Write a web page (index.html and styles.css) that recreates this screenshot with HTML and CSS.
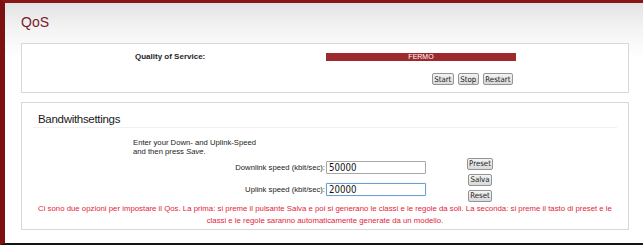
FILE: index.html
```html
<!DOCTYPE html>
<html lang="it">
<head>
    <meta charset="UTF-8">
    <meta name="viewport" content="width=device-width, initial-scale=1.0">
    <title>QoS</title>
    <link rel="stylesheet" href="styles.css">
</head>
<body>
    <div class="frame">
        <div class="page">
            <h1 class="title">QoS</h1>

            <!-- Stato del servizio -->
            <div class="box status-box">
                <span class="status-label">Quality of Service:</span>
                <span class="status-bar">FERMO</span>
                <span></span>
                <div class="status-actions">
                    <button class="btn">Start</button>
                    <button class="btn">Stop</button>
                    <button class="btn">Restart</button>
                </div>
            </div>

            <!-- Banda -->
            <div class="box bw-box">
                <h2 class="bw-title">Bandwithsettings</h2>
                <p class="hint">Enter your Down- and Uplink-Speed<br>and then press <i>Save</i>.</p>
                <div class="bw-form">
                    <div class="fields">
                        <label class="field">
                            <span class="field-label">Downlink speed (kbit/sec):</span>
                            <input class="speed" type="text" value="50000">
                        </label>
                        <label class="field">
                            <span class="field-label">Uplink speed (kbit/sec):</span>
                            <input class="speed focused" type="text" value="20000">
                        </label>
                    </div>
                    <div class="bw-buttons">
                        <button class="btn">Preset</button>
                        <button class="btn">Salva</button>
                        <button class="btn">Reset</button>
                    </div>
                </div>
                <p class="note">Ci sono due opzioni per impostare il Qos. La prima: si preme il pulsante Salva e poi si generano le classi e le regole da soli. La seconda: si preme il tasto di preset e le<br>classi e le regole saranno automaticamente generate da un modello.</p>
            </div>
        </div>
    </div>
</body>
</html>
```

FILE: styles.css
```css
/* Cornice della pagina */
body {
    margin: 0;
    padding: 0;
    font-family: "Liberation Sans", Arial, sans-serif;
    color: #222;
    background: #fff;
}

.frame {
    height: 245px;
    box-sizing: border-box;
    border-top: 3px solid #8a1717;
    border-left: 5px solid #7c1111;
    border-bottom: 2px solid #151515;
}

.page {
    height: 100%;
    box-sizing: border-box;
    padding: 0 14px 0 16px;
    background: linear-gradient(180deg, #e3e3e3 0, #f3f3f3 25px, #ffffff 55px);
    overflow: hidden;
}

.title {
    margin: 11px 0 13px 0;
    font-size: 14px;
    line-height: 16px;
    font-weight: normal;
    color: #7a1a2a;
}

.box {
    background: #fff;
    border: 1px solid #d8d8d8;
}

/* Stato */
.status-box {
    display: grid;
    grid-template-columns: 191px 190px;
    row-gap: 12px;
    padding: 9px 0 7px 113px;
}

.status-label {
    font-size: 8px;
    line-height: 8px;
    font-weight: bold;
    color: #1e1e1e;
    align-self: center;
}

.status-bar {
    height: 8px;
    line-height: 8px;
    background: #9d2b2e;
    color: #fff;
    font-size: 7px;
    text-align: center;
}

.status-actions {
    display: flex;
    justify-content: flex-end;
    gap: 4px;
    padding-right: 3px;
}

.btn {
    height: 12px;
    margin: 0;
    padding: 0 1.5px;
    font-family: "DejaVu Sans Condensed", Tahoma, sans-serif;
    font-size: 7.8px;
    line-height: 9px;
    color: #1a1a1a;
    background: linear-gradient(180deg, #f4f4f4, #d9d9d9);
    border: 1px solid #949494;
    border-radius: 2px;
}

/* Banda */
.bw-box {
    margin-top: 9px;
    padding: 9px 0 2px 0;
}

.bw-title {
    margin: 0 11px;
    padding: 0 0 1px 5px;
    font-size: 11.5px;
    letter-spacing: -0.3px;
    line-height: 14px;
    font-weight: normal;
    color: #1a1a1a;
    border-bottom: 1px solid #f0f0f0;
}

.hint {
    margin: 10px 0 0 111px;
    font-size: 7.7px;
    line-height: 9px;
    color: #222;
}

.bw-form {
    display: flex;
    margin-top: 1.5px;
}

.fields {
    display: flex;
    flex-direction: column;
    gap: 9px;
    padding-top: 3px;
}

.field {
    display: flex;
    align-items: center;
}

.field-label {
    width: 304px;
    padding-right: 1px;
    box-sizing: border-box;
    text-align: right;
    font-size: 7.7px;
    color: #222;
}

.speed {
    width: 100px;
    height: 13px;
    box-sizing: border-box;
    margin: 0;
    padding: 0 2px;
    font-family: "DejaVu Sans Condensed", Tahoma, sans-serif;
    font-size: 9.6px;
    color: #111;
    border: 1px solid #a8a8a8;
    border-radius: 1px;
    background: #fff;
}

.speed.focused {
    border-color: #6d9ed6;
    box-shadow: 0 0 1px #9cc2ec;
}

.bw-buttons {
    width: 100px;
    padding-left: 4px;
    display: flex;
    flex-direction: column;
    align-items: center;
    gap: 4px;
}

.note {
    margin: 1px 0 0 0;
    font-size: 7.8px;
    line-height: 12px;
    text-align: center;
    color: #e3243a;
}
```
